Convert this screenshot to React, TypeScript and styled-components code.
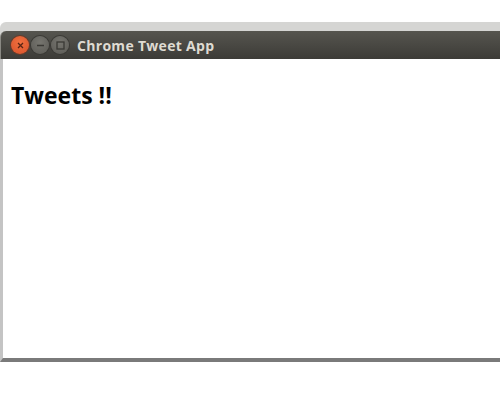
import React from "react";
import styled, { createGlobalStyle } from "styled-components";

const Global = createGlobalStyle`
  html, body { margin: 0; padding: 0; background: #ffffff; }
  body { width: 500px; height: 400px; overflow: hidden; }
`;

const Screen = styled.div`
  width: 500px;
  height: 400px;
  padding-top: 22px;
  box-sizing: border-box;
  background: #ffffff;
`;

const Frame = styled.div`
  display: flex;
  flex-direction: column;
  width: 500px;
  background: #d5d5d3;
  padding-top: 9px;
  border-top-left-radius: 6px;
`;

const TitleBar = styled.div`
  display: flex;
  align-items: center;
  height: 28px;
  padding-left: 10px;
  background: linear-gradient(#56554f, #3c3b37);
  border-top-left-radius: 6px;
  border-left: 1px solid #8a8983;
  box-sizing: border-box;
`;

const Buttons = styled.div`
  display: flex;
  gap: 2px;
  margin-right: 8px;
`;

const WinButton = styled.span<{ $close?: boolean }>`
  width: 18px;
  height: 18px;
  border-radius: 50%;
  display: flex;
  align-items: center;
  justify-content: center;
  background: ${(p) =>
    p.$close
      ? "radial-gradient(circle at 50% 35%, #f0703f, #d8512a)"
      : "radial-gradient(circle at 50% 35%, #76756f, #5a5954)"};
  box-shadow: 0 0 0 1px ${(p) => (p.$close ? "#6a3a28" : "#3a3935")};
`;

const Title = styled.span`
  font-family: "Open Sans", "DejaVu Sans", sans-serif;
  font-weight: 700;
  font-size: 14px;
  color: #dfdbd2;
  letter-spacing: 0.3px;
`;

const Body = styled.div`
  display: flex;
  flex-direction: column;
  height: 299px;
  background: #ffffff;
  border-left: 3px solid #c4c4c4;
  border-bottom: 4px solid #7a7a7a;
`;

const Heading = styled.h1`
  margin: 22px 0 0 8px;
  font-family: "Open Sans", "DejaVu Sans", sans-serif;
  font-weight: 700;
  font-size: 23px;
  line-height: 28px;
  color: #000000;
  letter-spacing: 0;
`;

export default function App() {
  return (
    <Screen>
      <Global />
      <Frame>
        <TitleBar>
          <Buttons>
            <WinButton $close>
              <svg width="7" height="7" viewBox="0 0 7 7">
                <path d="M1 1L6 6M6 1L1 6" stroke="#5a2414" strokeWidth="1.3" />
              </svg>
            </WinButton>
            <WinButton>
              <svg width="9" height="9" viewBox="0 0 9 9">
                <path d="M1 4.5H8" stroke="#3a3935" strokeWidth="1.5" />
              </svg>
            </WinButton>
            <WinButton>
              <svg width="9" height="9" viewBox="0 0 9 9">
                <rect x="1" y="1" width="7" height="7" fill="none" stroke="#3a3935" strokeWidth="1.3" />
              </svg>
            </WinButton>
          </Buttons>
          <Title>Chrome Tweet App</Title>
        </TitleBar>
        <Body>
          <Heading>Tweets !!</Heading>
        </Body>
      </Frame>
    </Screen>
  );
}
